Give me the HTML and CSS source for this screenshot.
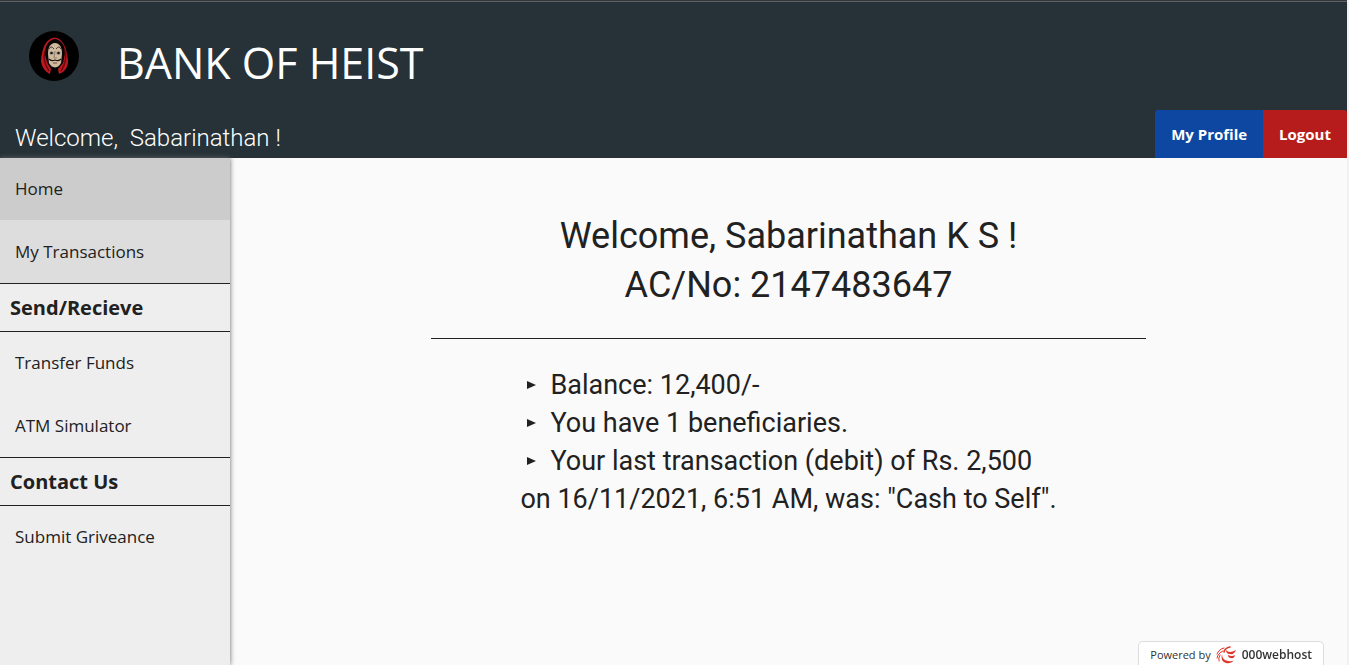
FILE: index.html
```html
<!DOCTYPE html>
<html lang="en">
<head>
<meta charset="utf-8">
<title>Bank of Heist</title>
<link rel="stylesheet" href="styles.css">
</head>
<body>
<header class="header">
  <div class="brand">
    <svg class="logo" viewBox="0 0 50 50" aria-hidden="true">
      <circle cx="25" cy="25" r="25" fill="#000"/>
      <path d="M25 6.500C17 8 13 17 12 29C12 35 16 41 21 43L22 38L18 31L16 23C16 14 20 9 26 8C32 9 36 14 36 22L34 32L29 38L30 43C36 41 39 36 39 30C38 17 34 7 25 6.500Z" fill="#b9191f"/>
      <path d="M16 20C14 27 16 34 20 40M36 19C38 27 36 34 32 40" fill="none" stroke="#6a0a0e" stroke-width="1.500"/>
      <path d="M26 9C20 10 17 15 17 23L19 33L22 37L30 37L33 32L35 22C35 15 32 10 26 9Z" fill="#0b0606"/>
      <path d="M26 12C21 12 19 17 19 23L20 32Q22 36 26 36.500Q30 36 32 32L33 23C33 17 31 12 26 12Z" fill="#cfba9d"/>
      <path d="M20 18Q22 14 25 18M27 18Q30 14 32 18" fill="none" stroke="#4a3a30" stroke-width="1"/>
      <ellipse cx="22.500" cy="22" rx="2" ry="1.500" fill="#596064"/>
      <ellipse cx="29.500" cy="22" rx="2" ry="1.500" fill="#596064"/>
      <circle cx="22.500" cy="22" r="0.900" fill="#111"/><circle cx="29.500" cy="22" r="0.900" fill="#111"/>
      <path d="M26 20L25 27H28" fill="none" stroke="#94806a" stroke-width="1"/>
      <path d="M20 28Q22 30.500 26 29Q30 30.500 32 28" fill="none" stroke="#1c1512" stroke-width="1.300"/>
      <path d="M24 32H28" stroke="#7b4c40" stroke-width="1"/>
    </svg>
    <h1 class="brand-name">BANK OF HEIST</h1>
  </div>
  <div class="userbar">
    <p class="greeting">Welcome,&nbsp; Sabarinathan !</p>
    <nav class="actions">
      <a class="action profile" href="#">My Profile</a>
      <a class="action logout" href="#">Logout</a>
    </nav>
  </div>
</header>
<div class="layout">
  <nav class="sidebar">
    <a class="item current" href="#">Home</a>
    <a class="item hovered" href="#">My Transactions</a>
    <h2 class="section">Send/Recieve</h2>
    <a class="item" href="#">Transfer Funds</a>
    <a class="item" href="#">ATM Simulator</a>
    <h2 class="section">Contact Us</h2>
    <a class="item" href="#">Submit Griveance</a>
  </nav>
  <main class="main">
    <div class="title">
      <h2 class="title-line">Welcome, Sabarinathan K S !</h2>
      <h2 class="title-line">AC/No: 2147483647</h2>
    </div>
    <ul class="facts">
      <li>Balance: 12,400/-</li>
      <li>You have 1 beneficiaries.</li>
      <li>Your last transaction (debit) of Rs. 2,500 <br>on 16/11/2021, 6:51 AM, was: "Cash to Self".</li>
    </ul>
  </main>
</div>
<a class="powered" href="#">
  <span>Powered by</span>
  <svg class="powered-icon" viewBox="0 0 21 18" aria-hidden="true">
    <g fill="none" stroke="#e0342b" stroke-linecap="round">
      <path d="M1 8Q3 3 8 2" stroke-width="1"/>
      <path d="M1 12Q2 7 7 5" stroke-width="1"/>
      <path d="M3 15Q2 12 4 9" stroke-width="1"/>
      <path d="M8 6Q9 2 14 1" stroke-width="1.500"/>
    </g>
    <g fill="#e0342b">
      <path d="M10 4Q13 8 20 4Q18 9 14 8Q10 8 10 4Z"/>
      <path d="M12 9Q16 11 19 9Q18 13 15 12Q12 12 12 9Z"/>
      <path d="M6 8Q6 14 12 15Q16 16 18 14Q15 18 10 17Q4 15 6 8Z"/>
    </g>
  </svg>
  <span class="host">000webhost</span>
</a>
</body>
</html>
```
FILE: styles.css
```css
* { box-sizing: border-box; }
body {
  margin: 0;
  min-height: 100vh;
  display: flex;
  flex-direction: column;
  background: #fafafa;
  border-right: 2px solid #f1f1f1;
  color: #212121;
  font-family: Roboto, sans-serif;
}
h1, h2, p, ul { margin: 0; padding: 0; font-weight: 400; }
a { color: inherit; text-decoration: none; }
.header {
  background: #263238;
  border-top: 1px solid #35363a;
  box-shadow: inset 0 1px #5f6368;
  color: #fff;
}
.brand {
  display: flex;
  align-items: flex-start;
  gap: 38px;
  padding: 30px 29px 0;
  height: 109px;
}
.logo { width: 50px; height: 50px; }
.brand-name { font: 400 43px/64px "Open Sans", sans-serif; }
.userbar { display: flex; justify-content: space-between; }
.greeting { padding: 10px 0 0 15px; font-size: 24px; line-height: 36px; font-weight: 300; }
.actions { display: flex; font: 700 15px/47px "Open Sans", sans-serif; }
.action { padding: 1px 16px 0; }
.profile { background: #0d47a1; border-top-left-radius: 3px; }
.logout { background: #b71c1c; border-top-right-radius: 3px; }
.layout { display: flex; flex: 1; }
.sidebar {
  width: 230px;
  flex: none;
  background: #eee;
  box-shadow: 0 0 5px #666;
  font-family: "Open Sans", sans-serif;
}
.item { display: block; padding: 0 15px; font-size: 17px; line-height: 63px; }
.current { background: #ccc; line-height: 62px; }
.hovered { background: #ddd; }
.section {
  padding: 0 10px;
  border: solid #212121;
  border-width: 1px 0;
  font-size: 20px;
  line-height: 47px;
  font-weight: 700;
}
.section + .item { line-height: 62px; }
.main { flex: 1; display: flex; flex-direction: column; align-items: center; padding-top: 54px; }
.title {
  width: 64%;
  padding-bottom: 28px;
  border-bottom: 1px solid #212121;
  text-align: center;
}
.title-line { font-size: 36px; line-height: 49px; }
.facts { margin-top: 27px; font-size: 27px; line-height: 38px; list-style: none; }
.facts li::before {
  content: "";
  display: inline-block;
  margin: 0 14px 5px 7px;
  border: solid transparent;
  border-width: 4px 0 4px 9px;
  border-left-color: #212121;
}
.powered {
  position: fixed;
  right: 25px;
  bottom: 0;
  display: flex;
  align-items: center;
  gap: 5px;
  height: 24px;
  padding: 2px 11px 0;
  border: 1px solid #ddd;
  border-bottom: 0;
  border-radius: 5px 5px 0 0;
  background: #fff;
  color: #333;
  font: 400 11px/22px "Open Sans", sans-serif;
}
.powered-icon { width: 21px; height: 18px; }
.host { font-size: 12px; font-weight: 600; }
```
